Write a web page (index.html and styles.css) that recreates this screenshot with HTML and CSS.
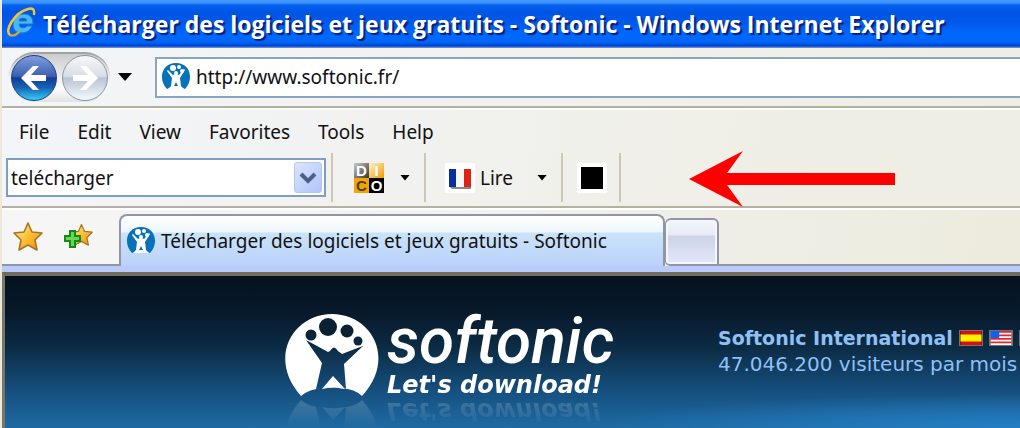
FILE: index.html
```html
<!DOCTYPE html>
<html lang="fr">
<head>
  <meta charset="UTF-8" />
  <meta name="viewport" content="width=device-width, initial-scale=1.0" />
  <title>Télécharger des logiciels et jeux gratuits - Softonic</title>
  <link rel="stylesheet" href="styles.css">
</head>
<body>
  <!-- shared symbols -->
  <svg class="symbols" width="0" height="0" aria-hidden="true">
    <defs>
      <linearGradient id="orange" x1="0" y1="0" x2="1" y2="1">
        <stop offset="0" stop-color="#fff3a0" />
        <stop offset="0.5" stop-color="#fdbf35" />
        <stop offset="1" stop-color="#ee8a08" />
      </linearGradient>
      <symbol id="softonic-badge" viewBox="0 0 30 30">
        <path d="M6 27C-3 18 0 1 15 1s18 17 9 26q-4-2-9-2t-9 2Z" fill="#0872b9" />
        <path d="M7 8l5 5q3-2 6 0l5-6 1 1-5 8 1 8 3 3H7l3-3 1-8-5-7Z" fill="#fff" />
        <path d="M13 24l2-4 2 4Z" fill="#0872b9" />
        <circle cx="12" cy="6" r="3" fill="#fff" />
        <circle cx="18" cy="5" r="2" fill="#fff" />
        <circle cx="21" cy="9" r="2" fill="#fff" />
        <circle cx="15" cy="11" r="2" fill="#fff" />
      </symbol>
      <symbol id="star" viewBox="0 0 30 30">
        <path d="M15 2l4 9 10 1-7 7 2 10-9-5-9 5 2-10-7-7 10-1Z" fill="url(#orange)" stroke="#a47427" stroke-width="1.6" stroke-linejoin="round" />
      </symbol>
    </defs>
  </svg>

  <div class="window">
    <header class="title-bar">
      <svg class="ie-icon" viewBox="0 0 30 30" aria-hidden="true">
        <path d="M26 19q-3 7-10 7-9 0-9-9 1-10 11-10 9 0 9 10H13q0 4 4 4 3 0 4-2ZM13 14h8q0-3-4-3t-4 3Z" fill="#4ab8f2" stroke="#1d7fd6" stroke-width="1" />
        <path d="M4 28C-2 24 8 6 22 2q7-2 6 5" fill="none" stroke="#f6c631" stroke-width="2.5" stroke-linecap="round" />
        <path d="M4 28q4 2 9-3" fill="none" stroke="#e5a81d" stroke-width="2" stroke-linecap="round" />
      </svg>
      <h1>Télécharger des logiciels et jeux gratuits - Softonic - Windows Internet Explorer</h1>
    </header>

    <div class="nav-bar">
      <div class="travel">
        <button class="round back" aria-label="Back">
          <svg viewBox="0 0 44 44"><path d="M9 22l12-12h6l-8 9h15v6H19l8 9h-6Z" fill="#fff" /></svg>
        </button>
        <button class="round forward" aria-label="Forward">
          <svg viewBox="0 0 44 44"><path d="M35 22L23 10h-6l8 9H10v6h15l-8 9h6Z" fill="#fff" /></svg>
        </button>
      </div>
      <button class="caret" aria-label="Recent pages"></button>
      <div class="address">
        <svg class="badge" aria-hidden="true"><use href="#softonic-badge" /></svg>
        <input type="text" value="http://www.softonic.fr/" aria-label="Address" />
      </div>
    </div>

    <div class="bars">
      <nav class="menu">
        <a href="#">File</a>
        <a href="#">Edit</a>
        <a href="#">View</a>
        <a href="#">Favorites</a>
        <a href="#">Tools</a>
        <a href="#">Help</a>
      </nav>

      <div class="toolbar">
        <div class="combo">
          <input type="text" value="telécharger" aria-label="Recherche" />
          <button aria-label="Ouvrir la liste">
            <svg viewBox="0 0 18 12"><path d="M2 2l7 7 7-7" fill="none" stroke="#4a6185" stroke-width="4" /></svg>
          </button>
        </div>
        <div class="group dico">
          <button class="dico-icon" aria-label="Dico">
            <span class="grey">D</span><span class="gold">I</span><span class="amber">C</span><span class="black">O</span>
          </button>
          <button class="caret small" aria-label="Options Dico"></button>
        </div>
        <div class="group lire">
          <button class="label-button">
            <svg class="fr-flag" viewBox="0 0 30 30" aria-hidden="true">
              <path d="M0 0h30v30H0Z" fill="#fff" />
              <path d="M5 24h21v2H7Z" fill="#888" />
              <path d="M4 6h7v18H4Z" fill="#0a2f9c" />
              <path d="M11 6h8v18h-8Z" fill="#f6f6f6" />
              <path d="M19 6h7v18h-7Z" fill="#e02116" />
            </svg>
            Lire
          </button>
          <button class="caret small" aria-label="Options Lire"></button>
        </div>
        <div class="group stop">
          <button class="black-square" aria-label="Stop"></button>
        </div>
      </div>
      <svg class="arrow" viewBox="0 0 206 56" aria-hidden="true">
        <path d="M0 28L54 0 38 22h168v12H38l16 22Z" fill="#fe0000" />
      </svg>
    </div>

    <div class="tabs">
      <div class="favorites">
        <button aria-label="Favorites Center"><svg viewBox="0 0 30 30"><use href="#star" /></svg></button>
        <button aria-label="Add to Favorites">
          <svg viewBox="0 0 30 30">
            <use href="#star" x="7" y="1" width="23" height="25" />
            <path d="M7 10h5v5h5v5h-5v6H7v-6H2v-5h5Z" fill="#66d94f" stroke="#148a1d" stroke-width="2" />
          </svg>
        </button>
      </div>
      <a class="tab" href="#">
        <svg class="badge" aria-hidden="true"><use href="#softonic-badge" /></svg>
        Télécharger des logiciels et jeux gratuits - Softonic
      </a>
      <button class="new-tab" aria-label="New tab"></button>
      <div class="tab-rest"></div>
    </div>

    <main class="page">
      <a class="logo" href="#">
        <svg class="logo-mark" viewBox="0 0 94 84" aria-hidden="true">
          <path fill-rule="evenodd" fill="#fff" d="M16 83C-18 45 8 1 47 1s65 44 30 82q-7-7-21-8H38q-14 1-22 8ZM21 27l16 23-6 26q15-3 30 0l-2-25 19-18q-11 4-21 8l-4-3q-4-7-8 0l-2 1Q34 34 21 27Z" />
          <path d="M37 76l11-13 12 13Q48 73 37 76Z" fill="#fff" />
          <circle cx="43" cy="14" r="9" fill="#0a2133" />
          <circle cx="62" cy="18" r="6.5" fill="#0a2133" />
          <circle cx="26" cy="22" r="5.5" fill="#0b2335" />
          <circle cx="73" cy="28" r="4.5" fill="#0c2840" />
        </svg>
        <span class="logo-text">
          <span class="name">softonic</span>
          <span class="tagline">Let's download!</span>
        </span>
      </a>
      <div class="international">
        <div class="countries">
          <strong>Softonic International</strong>
          <a href="#" aria-label="España">
            <svg class="flag" viewBox="0 0 24 16"><path d="M0 0h24v16H0Z" fill="#e00b0b" /><path d="M0 4h24v8H0Z" fill="#fff200" /></svg>
          </a>
          <a href="#" aria-label="United States">
            <svg class="flag" viewBox="0 0 24 16">
              <path d="M0 0h24v16H0Z" fill="#fff" />
              <path d="M0 1h24M0 5h24M0 9h24M0 13h24" stroke="#e9222f" stroke-width="2" />
              <path d="M0 0h10v8H0Z" fill="#0b63f3" />
            </svg>
          </a>
          <a href="#" aria-label="Deutschland">
            <svg class="flag" viewBox="0 0 24 16"><path d="M0 0h24v5H0Z" fill="#000" /><path d="M0 5h24v6H0Z" fill="#d00" /><path d="M0 11h24v5H0Z" fill="#fc0" /></svg>
          </a>
        </div>
        <p>47.046.200 visiteurs par mois</p>
      </div>
    </main>
  </div>
</body>
</html>
```
FILE: styles.css
```css
* {
  box-sizing: border-box;
}

body {
  margin: 0;
  background: #ece9d8;
  font-family: "Noto Sans", sans-serif;
  font-size: 19px;
  color: #111;
  overflow: hidden;
}

button {
  border: 0;
  padding: 0;
  background: none;
  font: inherit;
  color: inherit;
}

input {
  border: 0;
  padding: 0;
  min-width: 0;
  flex: 1;
  background: none;
  font: inherit;
  color: inherit;
  outline: 0;
}

a {
  color: inherit;
  text-decoration: none;
}

svg {
  display: block;
}

.symbols {
  position: absolute;
}

.window {
  display: flex;
  flex-direction: column;
  min-height: 100vh;
  padding-left: 2px;
  white-space: nowrap;
}

.title-bar {
  display: flex;
  align-items: center;
  gap: 7px;
  height: 48px;
  padding-left: 4px;
  background: linear-gradient(#4299ff 0, #3990fb 3px, #0562f0 5px, #0054e3 12px, #0058ea 22px, #0068ff 34px, #0066fb 42px, #0043c9 46px, #7da2e8 48px);
}

.title-bar h1 {
  margin: 0;
  font-family: "Open Sans", sans-serif;
  font-size: 23px;
  font-weight: 700;
  color: #fff;
  text-shadow: 2px 2px 1px #0b1f7a;
}

.ie-icon {
  width: 30px;
  height: 30px;
  margin-bottom: 4px;
}

.nav-bar {
  display: flex;
  align-items: center;
  height: 60px;
  padding-left: 7px;
  background: linear-gradient(90deg, #f3f5f8, #f1f1ec 60%, #eeeee6);
  border-bottom: 2px solid #b5b1a2;
}

.travel {
  display: flex;
  align-items: center;
  gap: 5px;
  padding: 1px 2px;
  border-radius: 26px;
  border-top: 2px solid #a3a3a3;
  background: linear-gradient(#ccc, #fff 70%, #e2e2e2);
}

.round {
  width: 46px;
  height: 46px;
  border-radius: 50%;
  border: 1px solid #8b95a5;
}

.back {
  border-color: #173e80;
  background: linear-gradient(#7f9edb 0, #3c5fb2 46%, #123c91 50%, #1763b5 72%, #36cdf6 100%);
}

.forward {
  background: linear-gradient(#f7f8fa 0, #d9dde4 46%, #bac4d2 50%, #d5dee9 75%, #f4fbff 100%);
}

.caret {
  width: 14px;
  height: 8px;
  margin: 0 23px 0 8px;
  background: #000;
  clip-path: polygon(0 0, 100% 0, 50% 100%);
}

.caret.small {
  width: 10px;
  height: 6px;
  margin: 0;
}

.address {
  display: flex;
  align-items: center;
  flex: 1;
  gap: 5px;
  height: 41px;
  padding-left: 4px;
  border: 2px solid #88a6c2;
  border-right: 0;
  background: #fff;
}

.badge {
  flex: none;
  width: 30px;
  height: 30px;
}

.bars {
  position: relative;
  background: linear-gradient(100deg, #f3f5f9, #f1f1ee 45%, #efeee5 80%);
  border-top: 2px solid #fbfbfa;
  border-bottom: 2px solid #b5b1a2;
}

.menu {
  display: flex;
  align-items: center;
  gap: 28px;
  height: 43px;
  padding-left: 17px;
}

.toolbar {
  display: flex;
  align-items: center;
  height: 53px;
  padding: 0 4px 4px;
}

.combo {
  display: flex;
  align-items: center;
  width: 320px;
  height: 39px;
  margin-right: 5px;
  padding: 2px 2px 2px 3px;
  border: 2px solid #7f9fc2;
  background: #fff;
}

.combo button {
  display: flex;
  align-items: center;
  justify-content: center;
  width: 28px;
  height: 31px;
  border: 1px solid #b3c6f4;
  border-radius: 3px;
  background: linear-gradient(135deg, #dbe5ff, #aec5fb);
}

.combo svg {
  width: 18px;
  height: 12px;
}

.group {
  display: flex;
  align-items: center;
  height: 49px;
  border-right: 2px solid #ccc8b4;
}

.dico {
  gap: 16px;
  padding: 0 14px 0 21px;
  border-left: 2px solid #ccc8b4;
}

.lire {
  gap: 24px;
  padding: 0 14px 0 19px;
}

.stop {
  padding: 0 12px 0 14px;
}

.dico-icon {
  display: grid;
  grid-template-columns: 15px 15px;
  grid-template-rows: 15px 15px;
  font-family: "Liberation Sans", sans-serif;
  font-size: 15px;
  line-height: 15px;
  font-weight: 700;
}

.grey {
  background: linear-gradient(135deg, #ccc, #333);
  color: #fff;
}

.gold {
  background: linear-gradient(135deg, #fff3cf, #f09b00);
  color: #fff;
}

.amber {
  background: #f6a500;
  color: #4a4028;
}

.black {
  background: #000;
  color: #fff;
}

.label-button {
  display: flex;
  align-items: center;
  gap: 5px;
}

.fr-flag {
  width: 30px;
  height: 30px;
}

.black-square {
  width: 30px;
  height: 30px;
  border: 4px solid #fff;
  background: #000;
}

/* lies over the empty part of the toolbar */
.arrow {
  position: absolute;
  left: 687px;
  top: 41px;
  width: 206px;
  height: 56px;
}

.tabs {
  display: flex;
  height: 64px;
  background: linear-gradient(100deg, #f6f6f6, #f1f1ed 50%, #ecebdd);
  border-top: 2px solid #fff;
  border-bottom: 6px solid #b9cbfa;
}

.favorites {
  display: flex;
  align-items: flex-start;
  gap: 20px;
  width: 117px;
  padding: 11px 0 0 11px;
  border-bottom: 2px solid #9295a8;
}

.favorites svg {
  width: 30px;
  height: 30px;
}

.tab {
  display: flex;
  align-items: center;
  gap: 5px;
  width: 546px;
  margin-top: 4px;
  padding-left: 5px;
  border: 2px solid #9195a5;
  border-bottom: 0;
  border-radius: 8px 8px 0 0;
  background: linear-gradient(#fff 0, #edf7fc 16px, #cae3f8 17px, #bad2fb 100%);
}

.new-tab {
  width: 54px;
  margin-top: 8px;
  border: 2px solid #9195a5;
  border-left-width: 1px;
  border-radius: 6px 6px 0 5px;
  background: linear-gradient(#f3f5fb 0, #e8ebf6 15px, #cdd4e8 16px, #e3e7fa 100%);
  box-shadow: inset 0 0 0 2px #f5f7ff;
}

.tab-rest {
  flex: 1;
  border-bottom: 2px solid #9295a8;
}

.page {
  display: flex;
  align-items: flex-start;
  flex: 1;
  padding: 37px 0 0 280px;
  border-top: 4px solid #706d5e;
  border-left: 3px solid #77766c;
  background:
    radial-gradient(ellipse 420px 34px at 100% 100%, #247fc5, transparent),
    linear-gradient(#05131e 0, #07182a 34px, #0c2c45 72px, #165080 116px, #1f6ba3 152px);
}

.logo {
  display: flex;
  flex: none;
  gap: 8px;
  width: 433px;
  color: #fff;
  -webkit-box-reflect: below -2px linear-gradient(transparent 65%, rgba(255, 255, 255, 0.2));
}

.logo-mark {
  width: 94px;
  height: 84px;
}

.logo-text {
  display: flex;
  flex-direction: column;
}

.name {
  font-family: Roboto, sans-serif;
  font-size: 64px;
  line-height: 58px;
  font-style: italic;
  font-weight: 500;
}

.tagline {
  font-family: "DejaVu Sans", sans-serif;
  font-size: 24px;
  line-height: 28px;
  font-style: italic;
  font-weight: 700;
}

.international {
  padding-top: 12px;
  font-family: "DejaVu Sans", sans-serif;
  font-size: 20px;
  line-height: 26px;
  color: #8fc0f5;
}

.international p {
  margin: 0;
}

.countries {
  display: flex;
  align-items: center;
  gap: 6px;
  font-size: 19px;
}

.flag {
  width: 24px;
  height: 16px;
  border: 1px solid #77716d;
}
```
